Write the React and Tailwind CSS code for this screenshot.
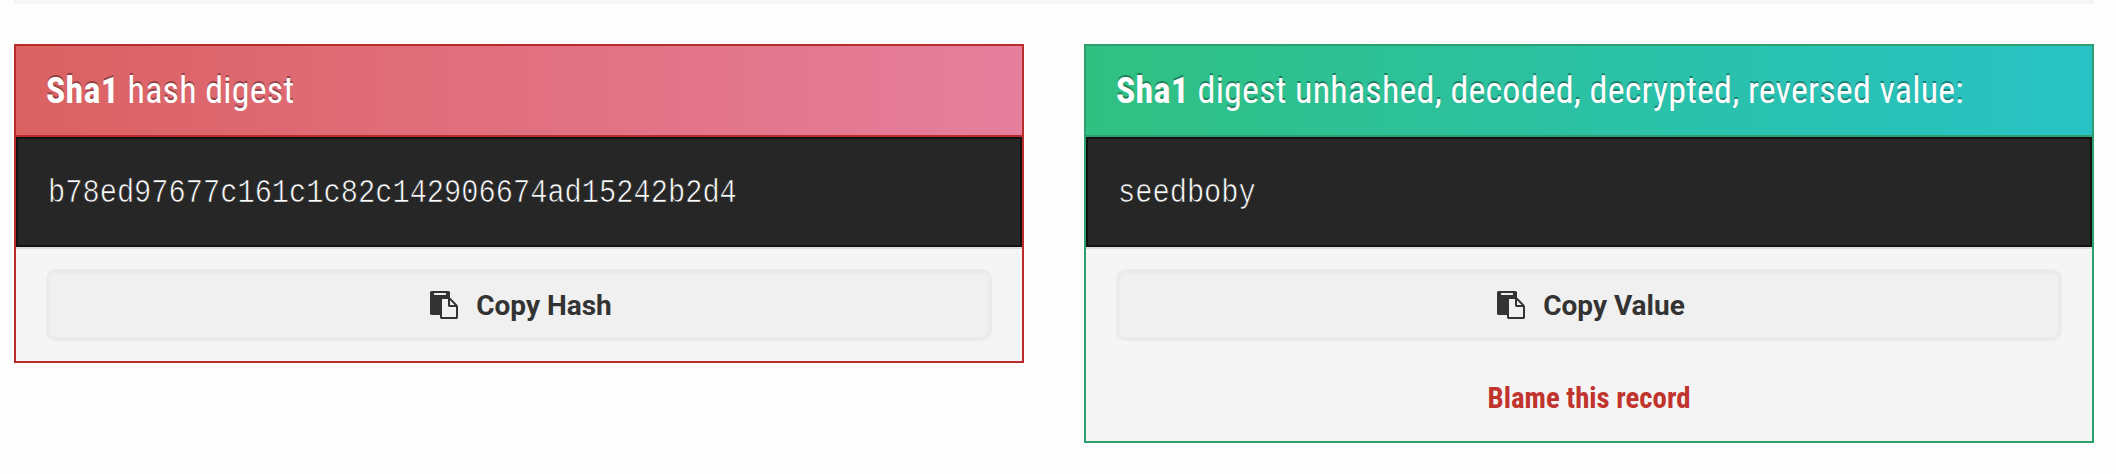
const PASTE =
  'M768 1664h896v-640h-416q-40 0-68-28t-28-68v-416h-384v1152zm256-1440v-64q0-13-9.5-22.5t-22.5-9.5h-704q-13 0-22.5 9.5t-9.5 22.5v64q0 13 9.5 22.5t22.5 9.5h704q13 0 22.5-9.5t9.5-22.5zm256 672h299l-299-299v299zm512 128v672q0 40-28 68t-68 28h-960q-40 0-68-28t-28-68v-160h-544q-40 0-68-28t-28-68v-1344q0-40 28-68t68-28h1088q40 0 68 28t28 68v328q21 13 36 28l408 408q28 28 48 76t20 88z';

function CopyButton({ label }) {
  return (
    <button className="flex h-[72px] w-full items-center justify-center rounded-[10px] border-4 border-[#ebebeb] bg-[#f0f0f0] pt-[2px] pl-[4px] text-[28px] font-bold text-[#333]">
      <svg viewBox="0 0 1792 1792" className="mr-[18px] mb-[2px] size-7 fill-current">
        <path d={PASTE} />
      </svg>
      <span>{label}</span>
    </button>
  );
}

function Panel({ frame, head, title, value, label, children }) {
  return (
    <section className={`w-[1010px] border-2 bg-[#f5f5f5] ${frame}`}>
      <h2 className={`flex h-[91px] items-center border-b-2 pl-[30px] text-[36px] whitespace-nowrap text-white [text-shadow:0_-2px_0_rgba(0,0,0,0.35)] ${head}`}>
        <span className="[font-stretch:75%] tracking-[0.2px]">
          <strong className="font-bold">Sha1</strong> {title}
        </span>
      </h2>
      <div className="flex h-[110px] items-center border-2 border-[#111] bg-[#262626] pt-[2px] pl-[30px] text-white shadow-[0_2px_0_#dcdcdc]">
        <span className="inline-block origin-left scale-x-[0.844] font-['Liberation_Mono',monospace] text-[34px] [-webkit-text-stroke:0.7px_#262626]">{value}</span>
      </div>
      <div className="px-[30px] pt-[22px] pb-5">
        <CopyButton label={label} />
        {children}
      </div>
    </section>
  );
}

export default function App() {
  return (
    <main className="h-[474px] bg-[#fdfdfd] px-[14px] font-[Roboto,sans-serif]">
      <div className="h-1 w-[2080px] bg-[#f5f5f5]" />
      <div className="flex items-start gap-[60px] pt-10">
        <Panel
          frame="border-[#b92c2c]"
          head="border-[#b92c2c] bg-linear-to-r from-[#db6161] to-[#e67e9d]"
          title="hash digest"
          value="b78ed97677c161c1c82c142906674ad15242b2d4"
          label="Copy Hash"
        />
        <Panel
          frame="border-[#2ca06e]"
          head="border-[#2ca06e] bg-linear-to-r from-[#30c081] to-[#28c2c5]"
          title="digest unhashed, decoded, decrypted, reversed value:"
          value="seedboby"
          label="Copy Value"
        >
          <div className="flex h-20 items-center justify-center pt-[35px] text-[28.8px] font-bold text-[#c0342d]">
            <a className="[font-stretch:75%]">Blame this record</a>
          </div>
        </Panel>
      </div>
    </main>
  );
}
